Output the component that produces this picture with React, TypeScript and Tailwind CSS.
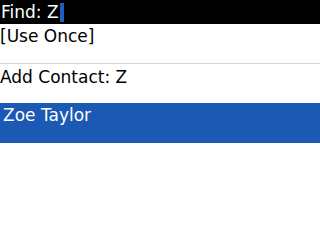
export default function App() {
  return (
    <main className="h-[240px] w-[320px] overflow-hidden bg-white font-['DejaVu_Sans',sans-serif] text-[17px] leading-[20px]">
      <div className="flex h-[24px] items-center bg-black pl-[1px] text-white">
        <span>Find: Z</span>
        <span className="ml-[1px] h-[19px] w-[4px] bg-[#1c5fbf]" />
      </div>

      <div className="h-[40px] border-b border-[#d4d4d4] pt-[2px] text-black">[Use Once]</div>
      <div className="h-[39px] pt-[3px] text-black">Add Contact: Z</div>

      <div className="h-[40px] bg-[#1b59b5] pl-[3px] pt-[2px] text-white">Zoe Taylor</div>
    </main>
  )
}
